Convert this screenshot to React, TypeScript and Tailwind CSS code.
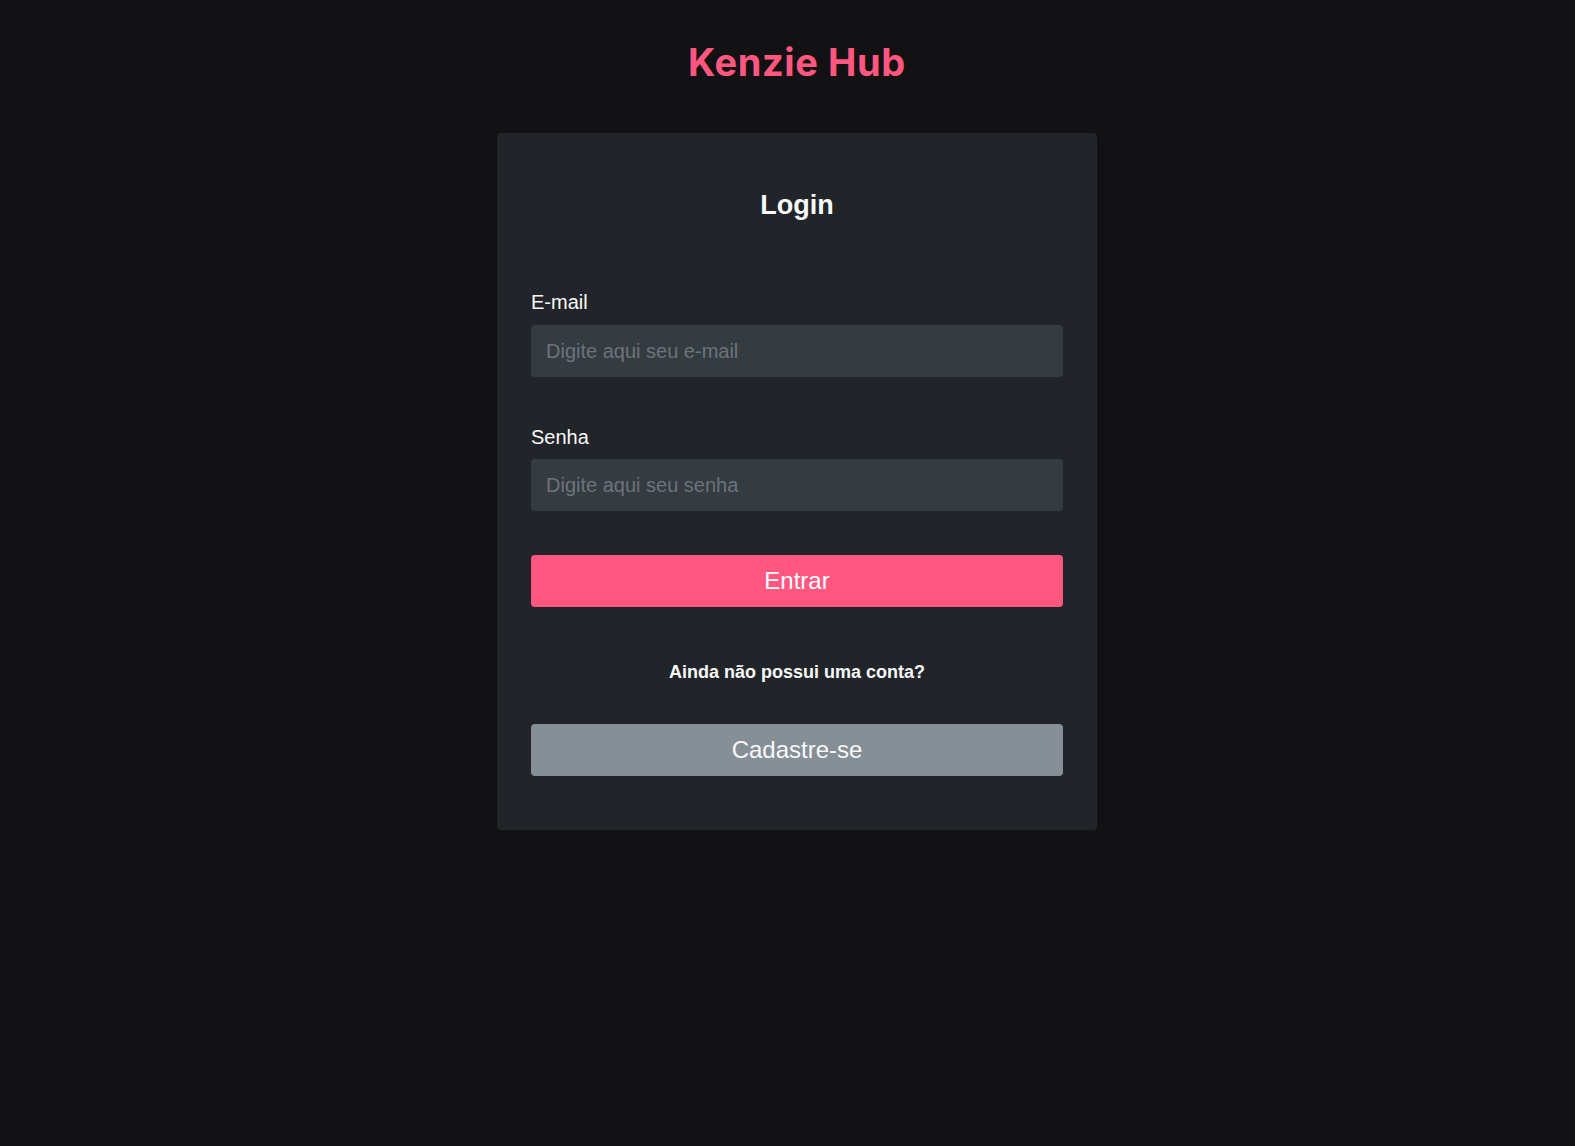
export default function App() {
  return (
    <div className="min-h-screen bg-[#121214] flex flex-col items-center pl-[19px] font-['Liberation_Sans',Arial,sans-serif]">
      <h1 className="mt-[39px] text-[38px] leading-[46px] font-bold tracking-[0.6px] text-[#FF577F] font-['Inter',sans-serif]">
        Kenzie Hub
      </h1>

      <form
        onSubmit={(e) => e.preventDefault()}
        className="mt-[48px] w-[600px] rounded bg-[#212529] px-[34px] pt-[56px] pb-[54px] flex flex-col"
      >
        <h2 className="text-center text-[27px] leading-[32px] font-bold text-[#F8F9FA]">Login</h2>

        <label className="mt-[70px] text-[20px] leading-[23px] text-[#F8F9FA]" htmlFor="email">
          E-mail
        </label>
        <input
          id="email"
          type="email"
          placeholder="Digite aqui seu e-mail"
          className="mt-[11px] h-[52px] w-full rounded bg-[#343B41] px-[15px] text-[20px] text-[#F8F9FA] placeholder:text-[#6c737a] outline-none"
        />

        <label className="mt-[49px] text-[20px] leading-[23px] text-[#F8F9FA]" htmlFor="senha">
          Senha
        </label>
        <input
          id="senha"
          type="password"
          placeholder="Digite aqui seu senha"
          className="mt-[10px] h-[52px] w-full rounded bg-[#343B41] px-[15px] text-[20px] text-[#F8F9FA] placeholder:text-[#6c737a] outline-none"
        />

        <button
          type="submit"
          className="mt-[44px] h-[52px] w-full rounded bg-[#FF577F] text-[24px] text-white"
        >
          Entrar
        </button>

        <p className="mt-[54px] text-center text-[18px] leading-[22px] font-bold text-[#F8F9FA]">
          Ainda não possui uma conta?
        </p>

        <button
          type="button"
          className="mt-[41px] h-[52px] w-full rounded bg-[#868E96] text-[24px] text-[#F8F9FA]"
        >
          Cadastre-se
        </button>
      </form>
    </div>
  );
}
